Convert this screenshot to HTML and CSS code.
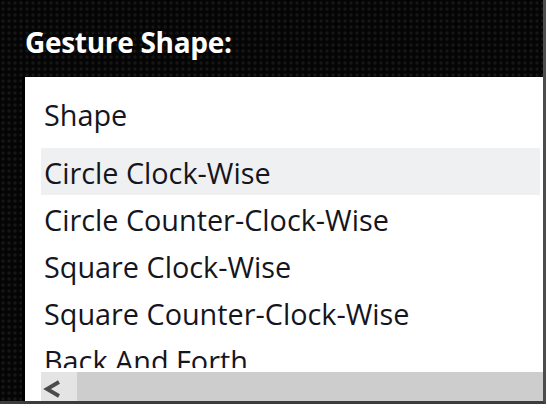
FILE: index.html
```html
<!DOCTYPE html>
<html>
<head>
<meta charset="utf-8">
<link rel="stylesheet" href="styles.css">
</head>
<body>
<div class="frame">
  <div class="title">Gesture Shape:</div>
  <div class="panel">
    <div class="header">Shape</div>
    <div class="viewport">
      <div class="list">
        <div class="row selected">Circle Clock-Wise</div>
        <div class="row">Circle Counter-Clock-Wise</div>
        <div class="row">Square Clock-Wise</div>
        <div class="row">Square Counter-Clock-Wise</div>
        <div class="row">Back And Forth</div>
      </div>
    </div>
    <div class="hscroll">
      <div class="arrow-btn">
        <svg width="20" height="18" viewBox="0 0 20 18"><path d="M17 2 L5 9 L17 16" fill="none" stroke="#4a4a4a" stroke-width="3.8"/></svg>
      </div>
      <div class="track"></div>
    </div>
  </div>
</div>
</body>
</html>
```
FILE: styles.css
```css
html, body {
  margin: 0;
  padding: 0;
  background: #ffffff;
}
.frame {
  box-sizing: border-box;
  width: 546px;
  height: 404px;
  background-color: #050505;
  background-image: radial-gradient(circle at 3px 3px, #171717 1.2px, transparent 2px);
  background-size: 6px 6px;
  border-right: 3px solid #4c4c4c;
  border-bottom: 3px solid #3c3c3c;
  display: flex;
  flex-direction: column;
  padding-left: 25px;
}
.title {
  font-family: "Open Sans", sans-serif;
  font-weight: 700;
  font-size: 28px;
  line-height: 36px;
  color: #ffffff;
  margin-top: 24px;
  height: 53px;
  letter-spacing: -0.3px;
}
.panel {
  flex: 1;
  background: #ffffff;
  display: flex;
  flex-direction: column;
  font-family: "Open Sans", sans-serif;
  font-size: 28.8px;
  color: #15151d;
  border-left: 3px solid #000;
  margin-left: -3px;
}
.header {
  height: 71px;
  line-height: 76px;
  padding-left: 19px;
  box-sizing: border-box;
}
.viewport {
  height: 220px;
  overflow: hidden;
  padding-left: 16px;
  padding-right: 3px;
  margin-bottom: 4px;
}
.row {
  height: 47px;
  line-height: 49px;
  padding-left: 3px;
  white-space: nowrap;
}
.row.selected {
  background: #eef0f2;
}
.hscroll {
  flex: 1;
  display: flex;
  padding-left: 16px;
}
.arrow-btn {
  width: 36px;
  background: #e4e4e4;
  display: flex;
  align-items: center;
  padding-left: 1px;
  padding-top: 4px;
  box-sizing: border-box;
}
.track {
  flex: 1;
  background: #cdcdcd;
}
```
